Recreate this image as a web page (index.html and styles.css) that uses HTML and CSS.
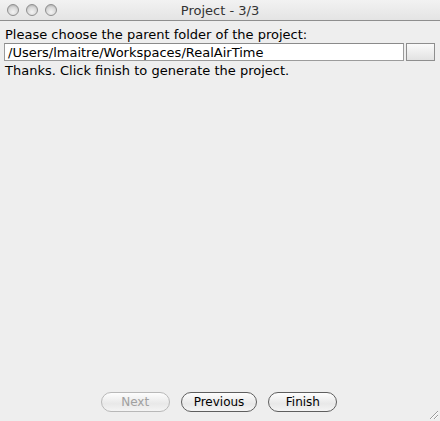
FILE: index.html
```html
<!DOCTYPE html>
<html>
<head>
<meta charset="utf-8">
<link rel="stylesheet" href="styles.css">
</head>
<body>
<div class="window">
  <div class="titlebar">
    <div class="lights">
      <span class="light"></span><span class="light"></span><span class="light"></span>
    </div>
    <div class="title">Project - 3/3</div>
  </div>
  <div class="content">
    <div class="label">Please choose the parent folder of the project:</div>
    <div class="row">
      <div class="field">/Users/lmaitre/Workspaces/RealAirTime</div>
      <div class="browse"></div>
    </div>
    <div class="label">Thanks. Click finish to generate the project.</div>
  </div>
  <div class="buttons">
    <div class="btn disabled">Next</div>
    <div class="btn">Previous</div>
    <div class="btn">Finish</div>
  </div>
  <div class="grip">
    <svg width="12" height="12" viewBox="0 0 12 12">
      <path d="M11 3 L3 11 M11 7 L7 11" stroke="#9a9a9a" stroke-width="1"/>
      <path d="M11 4 L4 11 M11 8 L8 11" stroke="#ffffff" stroke-width="1"/>
    </svg>
  </div>
</div>
</body>
</html>
```

FILE: styles.css
```css
html, body {
  margin: 0;
  padding: 0;
  background: #eeeeee;
}
.window {
  width: 440px;
  height: 421px;
  display: flex;
  flex-direction: column;
  position: relative;
  font-family: "DejaVu Sans", sans-serif;
  font-size: 13px;
  color: #000;
  background: #eeeeee;
  overflow: hidden;
}
.titlebar {
  height: 21px;
  flex: none;
  display: flex;
  align-items: center;
  position: relative;
  background: linear-gradient(#f2f2f2, #e4e4e4);
  border-bottom: 1px solid #8e8e8e;
  box-sizing: border-box;
}
.lights {
  display: flex;
  gap: 7px;
  padding-left: 7px;
}
.light {
  width: 12px;
  height: 12px;
  border-radius: 50%;
  box-sizing: border-box;
  border: 1px solid #8f8f8f;
  background: radial-gradient(circle at 50% 70%, #f4f4f4 0%, #d8d8d8 55%, #a0a0a0 100%);
}
.title {
  position: absolute;
  left: 0;
  right: 0;
  text-align: center;
  font-size: 13px;
  color: #333;
  top: 3px;
}
.content {
  padding: 6px 4px 0 5px;
  display: flex;
  flex-direction: column;
}
.label {
  line-height: 15px;
  height: 15px;
}
.row {
  display: flex;
  gap: 2px;
  margin: 1px 0 2px -1px;
}
.field {
  width: 400px;
  height: 18px;
  box-sizing: border-box;
  border: 1px solid #9b9b9b;
  border-top-color: #8a8a8a;
  background: #fff;
  padding: 1px 0 0 3px;
  line-height: 16px;
}
.browse {
  width: 29px;
  height: 18px;
  box-sizing: border-box;
  border: 1px solid #8e8e8e;
  background: linear-gradient(#fafafa, #e2e2e2);
}
.buttons {
  margin-top: auto;
  margin-bottom: 9px;
  display: flex;
  justify-content: center;
  gap: 11px;
  padding-right: 2px;
}
.btn {
  height: 20px;
  box-sizing: border-box;
  border: 1px solid #5e5e5e;
  border-radius: 10px;
  background: linear-gradient(#fdfdfd, #e8e8e8 60%, #f4f4f4);
  font-size: 12px;
  line-height: 18px;
  text-align: center;
  min-width: 69px;
  padding: 0 12px;
}
.btn.disabled {
  color: #a0a0a0;
  border-color: #b8b8b8;
}
.grip {
  position: absolute;
  right: 1px;
  bottom: 1px;
  width: 12px;
  height: 12px;
}
```
